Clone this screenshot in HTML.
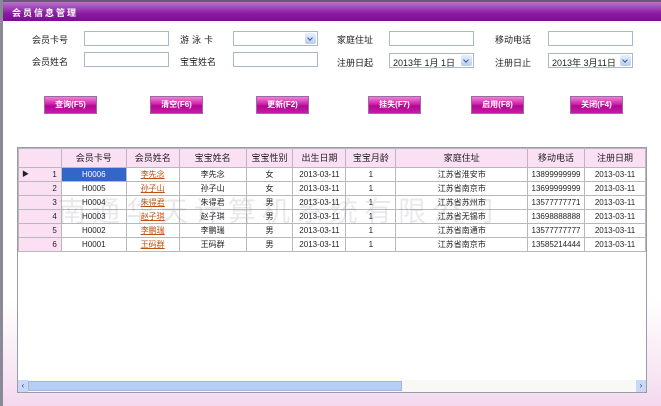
<!DOCTYPE html>
<html><head><meta charset="utf-8"><style>
*{margin:0;padding:0;box-sizing:border-box}
body{width:661px;height:406px;overflow:hidden;position:relative;background:linear-gradient(#fff 0,#fff 300px,#f6e4f2 380px,#f3d8ee 406px);font-family:"Liberation Sans","Noto Sans CJK SC",sans-serif;font-size:9px;color:#222}
.lb{position:absolute;left:0;top:0;width:3px;height:406px;background:#8a8a96}
.title{position:absolute;left:3px;top:0;width:658px;height:21px;background:linear-gradient(#c070d0 0,#a048b8 30%,#8a1aa0 60%,#7a0e92 100%);border-top:2px solid #6a5a7a}
.title span{position:absolute;left:9px;top:4px;color:#fff;font-weight:bold;font-size:9px;letter-spacing:2px}
.l{position:absolute;font-size:9px}
.in{position:absolute;height:15px;width:85px;border:1px solid #a8b8c8;background:#fff}
.sel{position:absolute;height:15px;width:85px;border:1px solid #a8b8c8;background:#fff;font-size:9px;padding:2px 0 0 3px}
.sel i{position:absolute;right:1px;top:1px;width:11px;height:11px;background:linear-gradient(#e8f0ff,#b8ccf0);border-radius:2px}
.sel i:after{content:"";position:absolute;left:3px;top:3px;width:3px;height:3px;border-right:1.5px solid #3a5a9a;border-bottom:1.5px solid #3a5a9a;transform:rotate(45deg)}
.btn{position:absolute;top:96px;width:53px;height:18px;background:linear-gradient(#f080d8 0,#d020a8 45%,#b00890 55%,#c81aa8 100%);border:1px solid #9a6aa0;color:#fff;font-weight:bold;font-size:8px;text-align:center;line-height:16px}
.grid{position:absolute;left:17px;top:147px;width:630px;height:246px;border:1px solid #9a9aa8;background:#fff}
table{border-collapse:collapse;position:absolute;left:0;top:0;table-layout:fixed}
td,th{border:1px solid #b8b8c0;height:14px;padding:0;font-size:8px;text-align:center;font-weight:normal;white-space:nowrap;overflow:hidden;line-height:12px}
th{background:#fbe0f4;height:19px;font-size:9px}
td.rh{background:#fbe0f4;text-align:right;padding-right:4px;position:relative}
a{color:#c05010;text-decoration:underline}
.sc{position:absolute;left:0;bottom:0;width:628px;height:12px;background:#f8f8f4}
.wm{position:absolute;left:58px;top:190px;font-size:28px;color:rgba(120,120,120,.16);letter-spacing:6px;white-space:nowrap}
</style></head><body>
<div class="lb"></div>
<div class="title"><span>会员信息管理</span></div>
<div class="l" style="left:32px;top:33px">会员卡号</div><div class="in" style="left:84px;top:31px"></div>
<div class="l" style="left:180px;top:33px;letter-spacing:3px">游泳卡</div><div class="sel" style="left:233px;top:31px"><i></i></div>
<div class="l" style="left:337px;top:33px">家庭住址</div><div class="in" style="left:389px;top:31px"></div>
<div class="l" style="left:495px;top:33px">移动电话</div><div class="in" style="left:548px;top:31px"></div>
<div class="l" style="left:32px;top:55px">会员姓名</div><div class="in" style="left:84px;top:52px"></div>
<div class="l" style="left:180px;top:55px">宝宝姓名</div><div class="in" style="left:233px;top:52px"></div>
<div class="l" style="left:337px;top:56px">注册日起</div><div class="sel" style="left:389px;top:53px">2013年 1月 1日<i></i></div>
<div class="l" style="left:495px;top:56px">注册日止</div><div class="sel" style="left:548px;top:53px">2013年 3月11日<i></i></div>
<div class="btn" style="left:44px">查询(F5)</div>
<div class="btn" style="left:150px">清空(F6)</div>
<div class="btn" style="left:256px">更新(F2)</div>
<div class="btn" style="left:368px">挂失(F7)</div>
<div class="btn" style="left:471px">启用(F8)</div>
<div class="btn" style="left:570px">关闭(F4)</div>
<div class="grid">
<table>
<colgroup><col style="width:43px"><col style="width:65px"><col style="width:53px"><col style="width:67px"><col style="width:47px"><col style="width:53px"><col style="width:50px"><col style="width:132px"><col style="width:57px"><col style="width:61px"></colgroup>
<tr><th></th><th>会员卡号</th><th>会员姓名</th><th>宝宝姓名</th><th>宝宝性别</th><th>出生日期</th><th>宝宝月龄</th><th>家庭住址</th><th>移动电话</th><th>注册日期</th></tr>
<tr><td class="rh"><span style="position:absolute;left:3px;font-size:7px">▶</span>1</td><td style="background:#3366c8;color:#fff">H0006</td><td><a>李先念</a></td><td>李先念</td><td>女</td><td>2013-03-11</td><td>1</td><td>江苏省淮安市</td><td>13899999999</td><td>2013-03-11</td></tr>
<tr><td class="rh">2</td><td>H0005</td><td><a>孙子山</a></td><td>孙子山</td><td>女</td><td>2013-03-11</td><td>1</td><td>江苏省南京市</td><td>13699999999</td><td>2013-03-11</td></tr>
<tr><td class="rh">3</td><td>H0004</td><td><a>朱得君</a></td><td>朱得君</td><td>男</td><td>2013-03-11</td><td>1</td><td>江苏省苏州市</td><td>13577777771</td><td>2013-03-11</td></tr>
<tr><td class="rh">4</td><td>H0003</td><td><a>赵子琪</a></td><td>赵子琪</td><td>男</td><td>2013-03-11</td><td>1</td><td>江苏省无锡市</td><td>13698888888</td><td>2013-03-11</td></tr>
<tr><td class="rh">5</td><td>H0002</td><td><a>李鹏瑞</a></td><td>李鹏瑞</td><td>男</td><td>2013-03-11</td><td>1</td><td>江苏省南通市</td><td>13577777777</td><td>2013-03-11</td></tr>
<tr><td class="rh">6</td><td>H0001</td><td><a>王码群</a></td><td>王码群</td><td>男</td><td>2013-03-11</td><td>1</td><td>江苏省南京市</td><td>13585214444</td><td>2013-03-11</td></tr>
</table>
<div class="sc"><div style="position:absolute;left:0;top:0;width:10px;height:12px;background:#c8d8f8;color:#345;font-size:8px;line-height:12px;text-align:center">‹</div><div style="position:absolute;left:10px;top:1px;width:374px;height:10px;background:#b8cdf4;border:1px solid #a0b8e0"></div><div style="position:absolute;right:0;top:0;width:10px;height:12px;background:#c8d8f8;color:#345;font-size:8px;line-height:12px;text-align:center">›</div></div>
</div>
<div class="wm">南通华天计算机系统有限公司</div>
</body></html>
